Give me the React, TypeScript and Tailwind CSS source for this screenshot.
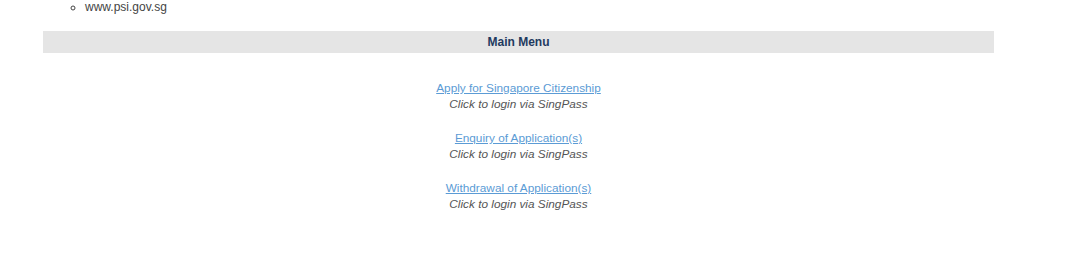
export default function App() {
  const items = [
    'Apply for Singapore Citizenship',
    'Enquiry of Application(s)',
    'Withdrawal of Application(s)',
  ];
  return (
    <div className="min-h-[254px] bg-white text-[12px] text-[#444]" style={{ fontFamily: '"Liberation Sans", Arial, sans-serif' }}>
      <ul className="list-[circle] pl-[85px] leading-[14px]">
        <li>www.psi.gov.sg</li>
      </ul>
      <div className="ml-[43px] w-[951px] mt-[17px]">
        <div className="h-[22px] bg-[#e5e5e5] flex items-center justify-center font-bold text-[#1f3a5f]">
          Main Menu
        </div>
        <div className="pt-[27px] flex flex-col items-center gap-[18px] leading-[16px] text-[11.8px]">
          {items.map((t) => (
            <div key={t} className="flex flex-col items-center">
              <a href="#" className="text-[#5b9bd5] underline">{t}</a>
              <span className="italic text-[#555]">Click to login via SingPass</span>
            </div>
          ))}
        </div>
      </div>
    </div>
  );
}
